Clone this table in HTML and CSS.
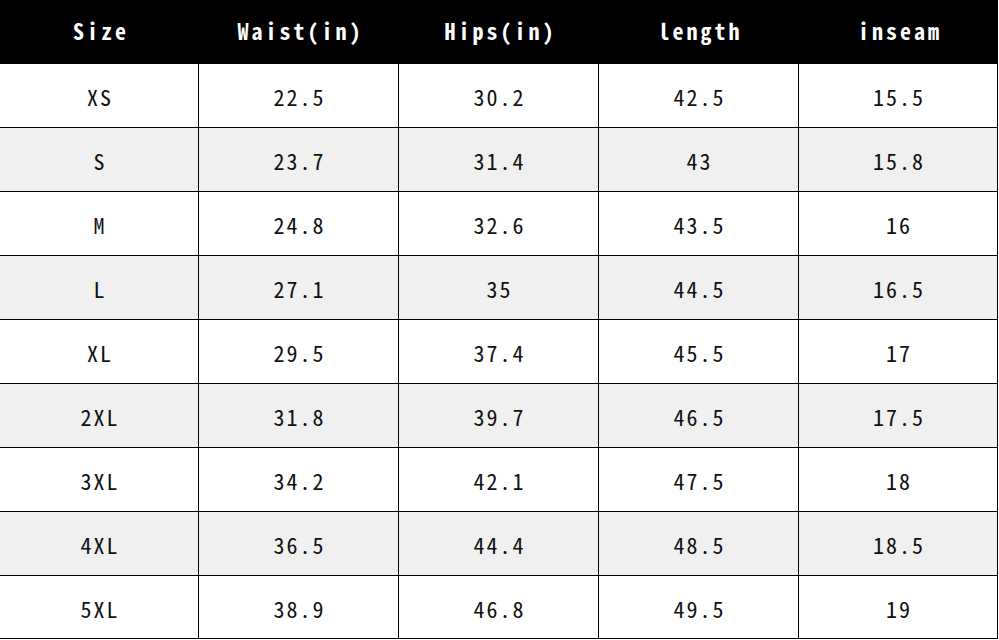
FILE: index.html
```html
<!DOCTYPE html>
<html lang="en">
<head>
<meta charset="utf-8">
<title>Size Chart</title>
<link rel="stylesheet" href="styles.css">
</head>
<body>
<div class="chart">
  <div class="head">Size</div><div class="head">Waist(in)</div><div class="head">Hips(in)</div><div class="head">length</div><div class="head">inseam</div>

  <div class="cell">XS</div><div class="cell">22.5</div><div class="cell">30.2</div><div class="cell">42.5</div><div class="cell">15.5</div>
  <div class="cell alt">S</div><div class="cell alt">23.7</div><div class="cell alt">31.4</div><div class="cell alt">43</div><div class="cell alt">15.8</div>
  <div class="cell">M</div><div class="cell">24.8</div><div class="cell">32.6</div><div class="cell">43.5</div><div class="cell">16</div>
  <div class="cell alt">L</div><div class="cell alt">27.1</div><div class="cell alt">35</div><div class="cell alt">44.5</div><div class="cell alt">16.5</div>
  <div class="cell">XL</div><div class="cell">29.5</div><div class="cell">37.4</div><div class="cell">45.5</div><div class="cell">17</div>
  <div class="cell alt">2XL</div><div class="cell alt">31.8</div><div class="cell alt">39.7</div><div class="cell alt">46.5</div><div class="cell alt">17.5</div>
  <div class="cell">3XL</div><div class="cell">34.2</div><div class="cell">42.1</div><div class="cell">47.5</div><div class="cell">18</div>
  <div class="cell alt">4XL</div><div class="cell alt">36.5</div><div class="cell alt">44.4</div><div class="cell alt">48.5</div><div class="cell alt">18.5</div>
  <div class="cell last">5XL</div><div class="cell last">38.9</div><div class="cell last">46.8</div><div class="cell last">49.5</div><div class="cell last">19</div>
</div>
</body>
</html>
```
FILE: styles.css
```css
html, body {
  margin: 0;
  padding: 0;
  background: #ffffff;
}

.chart {
  display: grid;
  grid-template-columns: 199px 200px 200px 200px 199px;
  grid-auto-rows: 64px;
  width: 998px;
  font-family: "Noto Sans Mono CJK SC", "DejaVu Sans Mono", monospace;
  font-size: 22px;
  letter-spacing: 2px;
  color: #111111;
}

.head {
  box-sizing: border-box;
  background: #000000;
  color: #ffffff;
  font-weight: bold;
  display: flex;
  align-items: center;
  justify-content: center;
  letter-spacing: 3px;
  padding-left: 3px;
  padding-bottom: 4px;
}

.cell {
  box-sizing: border-box;
  border-right: 1px solid #000000;
  border-bottom: 1px solid #000000;
  display: flex;
  align-items: center;
  justify-content: center;
  padding-top: 1px;
  padding-left: 2px;
  background: #ffffff;
}

.cell.alt {
  background: #f0f0f0;
}

.cell.last {
  height: 63px;
}
```
